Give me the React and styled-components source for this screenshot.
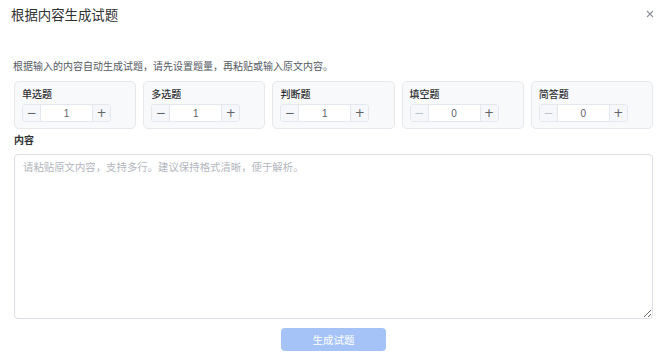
import styled, { createGlobalStyle } from "styled-components";

const GlobalStyle = createGlobalStyle`
  html, body {
    margin: 0;
    padding: 0;
    background: #ffffff;
  }
  body {
    font-family: "Noto Sans CJK SC", "Noto Sans", sans-serif;
    color: #303133;
  }
  * {
    box-sizing: border-box;
  }
`;

const types = [
  { label: "单选题", value: 1 },
  { label: "多选题", value: 1 },
  { label: "判断题", value: 1 },
  { label: "填空题", value: 0 },
  { label: "简答题", value: 0 },
];

const App = () => {
  return (
    <Dialog>
      <GlobalStyle />
      <Header>
        <Title>根据内容生成试题</Title>
        <Close aria-label="close">
          <svg width="8" height="8" viewBox="0 0 8 8">
            <path d="M1 1L7 7M7 1L1 7" stroke="#8c8f96" strokeWidth="1.1" />
          </svg>
        </Close>
      </Header>
      <Body>
        <Hint>根据输入的内容自动生成试题，请先设置题量，再粘贴或输入原文内容。</Hint>
        <CardGrid>
          {types.map((t) => (
            <Card key={t.label}>
              <CardLabel>{t.label}</CardLabel>
              <Counter>
                <StepButton disabled={t.value === 0}>−</StepButton>
                <CountInput>{t.value}</CountInput>
                <StepButton>+</StepButton>
              </Counter>
            </Card>
          ))}
        </CardGrid>
        <FieldLabel>内容</FieldLabel>
        <ContentArea placeholder="请粘贴原文内容，支持多行。建议保持格式清晰，便于解析。" />
        <Footer>
          <SubmitButton disabled>生成试题</SubmitButton>
        </Footer>
      </Body>
    </Dialog>
  );
};

export default App;

const Dialog = styled.div`
  width: 666px;
  height: 359px;
  background: #ffffff;
`;

const Header = styled.div`
  height: 28px;
  padding: 0 11px;
  display: flex;
  align-items: center;
  justify-content: space-between;
`;

const Title = styled.div`
  font-size: 13.4px;
  line-height: 16px;
  color: #303133;
`;

const Close = styled.button`
  width: 12px;
  height: 12px;
  padding: 0;
  margin-right: -1px;
  border: none;
  background: none;
  display: flex;
  align-items: center;
  justify-content: center;
`;

const Body = styled.div`
  padding: 0 13px 0 14px;
`;

const Hint = styled.div`
  margin-top: 31px;
  margin-left: -1px;
  font-size: 10px;
  line-height: 14px;
  color: #555a63;
`;

const CardGrid = styled.div`
  margin-top: 8px;
  display: grid;
  grid-template-columns: repeat(5, 1fr);
  gap: 7px;
`;

const Card = styled.div`
  height: 48px;
  padding: 5px 7px 0;
  background: #f8f9fb;
  border: 1px solid #e6e8ec;
  border-radius: 5px;
`;

const CardLabel = styled.div`
  font-size: 10px;
  line-height: 14px;
  color: #303133;
  font-weight: 500;
`;

const Counter = styled.div`
  margin-top: 3px;
  width: 89px;
  height: 18px;
  display: flex;
  border: 1px solid #e4e7ed;
  border-radius: 3px;
  overflow: hidden;
  background: #ffffff;
`;

const StepButton = styled.div`
  width: 18px;
  flex: none;
  display: flex;
  align-items: center;
  justify-content: center;
  background: #f5f7fa;
  font-family: "DejaVu Sans", sans-serif;
  font-size: 12px;
  color: ${(p) => (p.disabled ? "#c0c4cc" : "#606266")};

  &:first-child {
    border-right: 1px solid #e4e7ed;
  }
  &:last-child {
    border-left: 1px solid #e4e7ed;
  }
`;

const CountInput = styled.div`
  flex: 1;
  display: flex;
  align-items: center;
  justify-content: center;
  font-family: "Liberation Sans", sans-serif;
  font-size: 10px;
  color: #606266;
`;

const FieldLabel = styled.div`
  margin-top: 4px;
  font-size: 10px;
  line-height: 14px;
  font-weight: 700;
  color: #303133;
`;

const ContentArea = styled.textarea`
  display: block;
  margin-top: 7px;
  width: 100%;
  height: 165px;
  padding: 4px 8px;
  border: 1px solid #dcdfe6;
  border-radius: 4px;
  font-family: "Noto Sans CJK SC", sans-serif;
  font-size: 10.4px;
  line-height: 15px;
  color: #303133;
  outline: none;

  &::placeholder {
    color: #b2b6bd;
  }
`;

const Footer = styled.div`
  display: flex;
  justify-content: center;
  margin-top: 9px;
`;

const SubmitButton = styled.button`
  width: 105px;
  height: 23px;
  border: none;
  border-radius: 4px;
  background: #a6c3f7;
  color: #ffffff;
  font-family: "Noto Sans CJK SC", sans-serif;
  font-size: 10.5px;
  cursor: not-allowed;
`;
